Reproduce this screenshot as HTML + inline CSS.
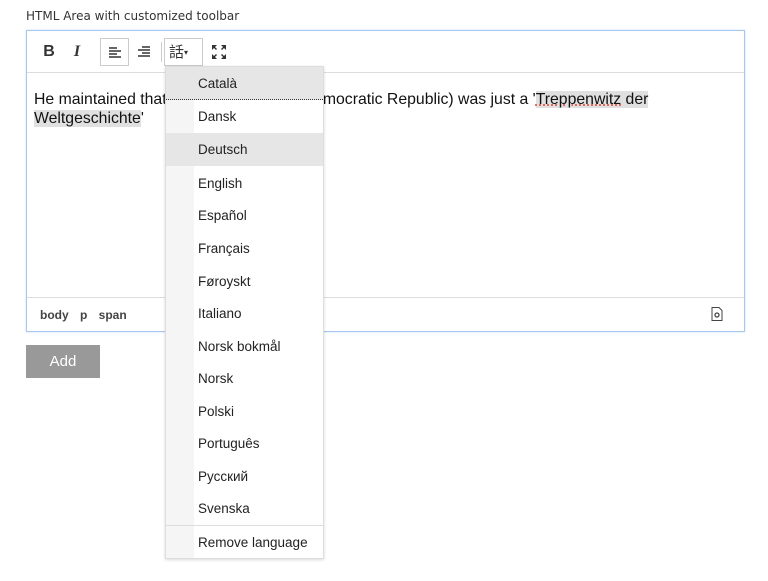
<!DOCTYPE html>
<html><head><meta charset="utf-8"><style>
*{box-sizing:border-box;margin:0;padding:0}
body{width:768px;height:581px;background:#fff;font-family:"Liberation Sans",Arial,sans-serif;position:relative;overflow:hidden;color:#222}
.lbl{position:absolute;left:26px;top:9px;color:#333;font-family:"DejaVu Sans",sans-serif;font-size:12px}
.ed{position:absolute;left:26px;top:30px;width:719px;height:302px;border:1px solid #a8c8f0;box-shadow:0 0 2px #c8dcf8}
.tb{position:absolute;left:0;top:0;right:0;height:42px;border-bottom:1px solid #ddd}
.btn{position:absolute;top:7px;height:28px;font-size:16px;color:#333;text-align:center;line-height:28px}
.box{border:1px solid #ccc}
.content{position:absolute;left:7px;top:59px;font-size:15.8px;line-height:19px;color:#111}
.hl{background:#e0e0e0}
.sp{text-decoration:underline dotted #e04030}
.status{position:absolute;left:0;right:0;top:266px;height:35px;border-top:1px solid #ddd;font-size:12px;font-weight:bold;color:#444;padding:10px 0 0 13px;word-spacing:8px}
.add{position:absolute;left:26px;top:345px;width:74px;height:33px;background:#999;color:#fff;font-size:15px;text-align:center;line-height:33px}
.menu{position:absolute;left:165px;top:66px;width:159px;height:493px;background:#fff;border:1px solid #ddd;box-shadow:0 1px 3px rgba(0,0,0,.15)}
.menu .col{position:absolute;left:0;top:0;bottom:0;width:28px;background:#f5f5f5}
.it{position:absolute;left:0;width:157px;height:33px;font-size:13.5px;line-height:33px;padding-left:32px;color:#222}
.sel{background:#e6e6e6}
</style></head><body>
<div class="lbl">HTML Area with customized toolbar</div>
<div class="ed">
 <div class="tb">
  <div class="btn" style="left:14px;width:16px;font-weight:bold">B</div>
  <div class="btn" style="left:42px;width:16px;font-style:italic;font-family:'Liberation Serif',serif;font-weight:bold">I</div>
  <div class="btn box" style="left:73px;width:29px"><svg width="14" height="12" viewBox="0 0 14 12" style="margin-top:8px"><path d="M1 1h8M1 4h12M1 7h8M1 10h12" stroke="#333" stroke-width="1.5"/></svg></div>
  <div class="btn" style="left:107px;width:20px"><svg width="14" height="12" viewBox="0 0 14 12" style="margin-top:8px"><path d="M5 1h8M1 4h12M5 7h8M1 10h12" stroke="#333" stroke-width="1.5"/></svg></div>
  <div style="position:absolute;left:134px;top:11px;width:1px;height:20px;background:#ccc"></div>
  <div class="btn box" style="left:137px;width:39px;font-size:15px;text-align:left;padding-left:4px;font-family:'Noto Sans CJK SC',sans-serif;line-height:26px">話<span style="font-size:8px;vertical-align:middle">▾</span></div>
  <div class="btn" style="left:182px;width:20px"><svg width="16" height="16" viewBox="0 0 16 16" style="margin-top:6px" fill="#333"><path d="M1 1h5l-2 2 2 2-1 1-2-2-2 2zM15 1v5l-2-2-2 2-1-1 2-2-2-2zM1 15v-5l2 2 2-2 1 1-2 2 2 2zM15 15h-5l2-2-2-2 1-1 2 2 2-2z"/></svg></div>
 </div>
 <div class="content">He maintained that the DDR (German Democratic Republic) was just a '<span class="hl"><span class="sp">Treppenwitz</span> der <br>Weltgeschichte</span>'</div>
 <div class="status">body p span</div>
 <svg style="position:absolute;left:684px;top:276px" width="12" height="14" viewBox="0 0 12 14"><path d="M1 .5h7l3 3v10H1z" fill="#fff" stroke="#444"/><circle cx="6" cy="8" r="2" fill="none" stroke="#444" stroke-width="1.3"/></svg>
</div>
<div class="add">Add</div>
<div class="menu"><div class="col"></div>
<div class="it sel" style="top:0">Català</div>
<div class="it" style="top:33px;background:#fff;left:28px;width:129px;padding-left:4px">Dansk</div>
<div style="position:absolute;left:0;right:0;top:32px;border-top:1px dotted #333"></div>
<div class="it sel" style="top:66px">Deutsch</div>
<div class="it" style="top:100px">English</div>
<div class="it" style="top:132px">Español</div>
<div class="it" style="top:165px">Français</div>
<div class="it" style="top:198px">Føroyskt</div>
<div class="it" style="top:230px">Italiano</div>
<div class="it" style="top:263px">Norsk bokmål</div>
<div class="it" style="top:295px">Norsk</div>
<div class="it" style="top:328px">Polski</div>
<div class="it" style="top:360px">Português</div>
<div class="it" style="top:393px">Русский</div>
<div class="it" style="top:425px">Svenska</div>
<div style="position:absolute;left:0;right:0;top:458px;height:1px;background:#ddd"></div>
<div class="it" style="top:459px">Remove language</div>
</div>
</body></html>
